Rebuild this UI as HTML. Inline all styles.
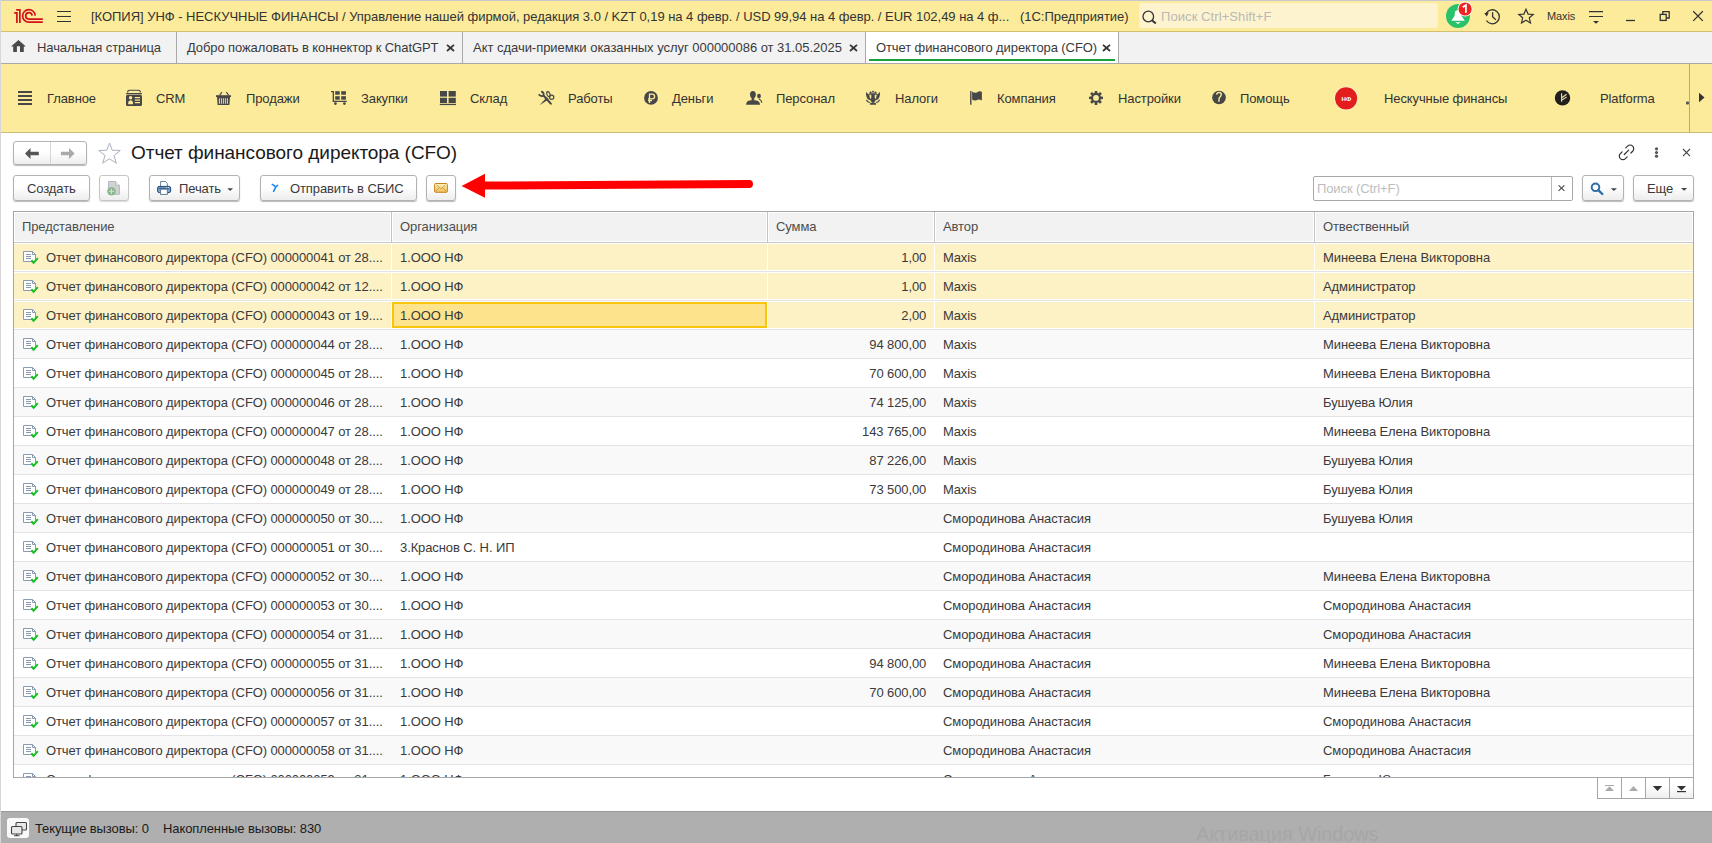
<!DOCTYPE html><html><head><meta charset="utf-8"><style>
*{box-sizing:border-box;margin:0;padding:0}
html,body{width:1712px;height:843px;overflow:hidden;background:#fff}
body{position:relative;font-family:"Liberation Sans",sans-serif;font-size:13px;color:#3a3a3a}
.a{position:absolute}
.t{position:absolute;white-space:nowrap;line-height:15px;letter-spacing:-0.1px}
svg{position:absolute;overflow:visible}
.btn{position:absolute;border:1px solid #b3b3b3;border-radius:3px;background:linear-gradient(#fff 0%,#fff 45%,#ededed 100%);box-shadow:0 1px 1px rgba(0,0,0,.28)}
</style></head><body><div class="a" style="left:0;top:0;width:1712px;height:1px;background:#c6c7cf"></div>
<div class="a" style="left:0;top:0;width:1px;height:843px;background:#d6d6d8"></div>
<div class="a" style="left:1px;top:1px;width:1711px;height:30px;background:#fbeb9b"></div>
<div class="a" style="left:1px;top:31px;width:1711px;height:1px;background:#d3c06c"></div>
<svg style="left:0;top:0" width="50" height="30" viewBox="0 0 50 30">
<g fill="none" stroke="#d4101c" stroke-width="1.7" stroke-linecap="butt">
<path d="M14.2,12.9 H16.9 V22.9"/>
<path d="M16.2,9.9 H19.85 V22.9"/>
<path d="M35.2,15.6 A6.3,6.3 0 1 0 28.9,22.15 H42.8"/>
<path d="M32.1,15.6 A3.2,3.2 0 1 0 29.0,19.1 H42.8"/>
</g></svg>
<svg style="left:0;top:0" width="80" height="30"><g stroke="#333" stroke-width="1.2"><path d="M57,11.5H71M57,16.5H71M57,21.5H71"/></g></svg>
<div class="t" style="left:91px;top:9px;color:#333;letter-spacing:-0.03px">[КОПИЯ] УНФ - НЕСКУЧНЫЕ ФИНАНСЫ / Управление нашей фирмой, редакция 3.0 / KZT 0,19 на 4 февр. / USD 99,94 на 4 февр. / EUR 102,49 на 4 ф...&nbsp;&nbsp;&nbsp;(1С:Предприятие)</div>
<div class="a" style="left:1139px;top:3px;width:299px;height:25px;background:#fdf4cf;border-radius:3px"></div>
<svg style="left:0;top:0" width="1712" height="30"><g fill="none" stroke="#333" stroke-width="1.3"><circle cx="1148.3" cy="16.5" r="5.3"/><path d="M1152,20.3 L1155.8,23.5" stroke-width="2"/></g></svg>
<div class="t" style="left:1161px;top:9px;color:#b9b9b9;letter-spacing:0.08px">Поиск Ctrl+Shift+F</div>
<svg style="left:0;top:0" width="1712" height="32">
<circle cx="1458" cy="15.9" r="12" fill="#27c26a"/>
<path d="M1451.3,20.8 L1464.8,20.8 L1461.5,16 L1461,11.5 Q1458,9 1455,11.5 L1454.5,16 Z" fill="#fff"/>
<path d="M1455.2,22.3 H1460.8 L1458,23.9 Z" fill="#fff"/>
<circle cx="1465.1" cy="9" r="7.6" fill="#fff"/>
<circle cx="1465.1" cy="9" r="6.6" fill="#f02323"/>
<path d="M1462.7,7.2 L1465.9,5.2 V12.7" fill="none" stroke="#fff" stroke-width="1.8"/>
</svg>
<svg style="left:0;top:0" width="1712" height="32"><g fill="none" stroke="#333" stroke-width="1.3">
<path d="M1486.3,13.2 A7,7 0 1 1 1486.4,20.5"/>
<path d="M1492.6,12.2 V16.8 L1495.8,19.8"/>
</g><path d="M1484.2,13.3 L1488.8,12.6 L1486.8,16.6 Z" fill="#333"/></svg>
<svg style="left:0;top:0" width="1712" height="32"><path d="M1526,9.3 L1528.1,14.1 L1533.2,14.5 L1529.3,17.8 L1530.5,22.9 L1526,20.2 L1521.5,22.9 L1522.7,17.8 L1518.8,14.5 L1523.9,14.1 Z" fill="none" stroke="#333" stroke-width="1.2" stroke-linejoin="miter"/></svg>
<div class="t" style="left:1547px;top:9px;font-size:11px;color:#333">Maxis</div>
<svg style="left:0;top:0" width="1712" height="32"><g stroke="#333" stroke-width="1.2"><path d="M1589,11.6H1603M1589,16.5H1603"/></g><path d="M1593,21 H1599 L1596,23.8 Z" fill="#333"/></svg>
<svg style="left:0;top:0" width="1712" height="32"><g fill="none" stroke="#333" stroke-width="1.3"><path d="M1626,20.5H1635"/><rect x="1660.2" y="14.4" width="6" height="6"/><path d="M1662.8,14.4 V11.6 H1669.2 V18 H1666.2"/><path d="M1693.2,11.3 L1702.8,20.9 M1702.8,11.3 L1693.2,20.9"/></g></svg>
<div class="a" style="left:1px;top:32px;width:1711px;height:31px;background:#f2f2f2"></div>
<div class="a" style="left:1px;top:63px;width:1711px;height:1px;background:#a9a9a9"></div>
<div class="a" style="left:866px;top:32px;width:252px;height:31px;background:#fff"></div>
<div class="a" style="left:176px;top:32px;width:1px;height:31px;background:#a9a9a9"></div>
<div class="a" style="left:462px;top:32px;width:1px;height:31px;background:#a9a9a9"></div>
<div class="a" style="left:865px;top:32px;width:1px;height:31px;background:#a9a9a9"></div>
<div class="a" style="left:1118px;top:32px;width:1px;height:31px;background:#a9a9a9"></div>
<div class="a" style="left:869px;top:59px;width:246px;height:2px;background:#17a03c"></div>
<svg style="left:0;top:0" width="60" height="64"><path d="M18.45,40 L11,46.6 H13.2 V51.9 H16.9 V46.3 H20 V51.9 H23.8 V46.6 H25.9 Z" fill="#4a4a4a"/></svg>
<div class="t" style="left:37px;top:40px">Начальная страница</div>
<div class="t" style="left:187px;top:40px">Добро пожаловать в коннектор к ChatGPT</div>
<div class="t" style="left:473px;top:40px;letter-spacing:-0.03px">Акт сдачи-приемки оказанных услуг 000000086 от 31.05.2025</div>
<div class="t" style="left:876px;top:40px">Отчет финансового директора (CFO)</div>
<svg style="left:0;top:0" width="1712" height="64"><path d="M447,44.8 L454,51 M454,44.8 L447,51" stroke="#333" stroke-width="1.7"/></svg>
<svg style="left:0;top:0" width="1712" height="64"><path d="M850,44.8 L857,51 M857,44.8 L850,51" stroke="#333" stroke-width="1.7"/></svg>
<svg style="left:0;top:0" width="1712" height="64"><path d="M1103,44.8 L1110,51 M1110,44.8 L1103,51" stroke="#333" stroke-width="1.7"/></svg>
<div class="a" style="left:1px;top:64px;width:1711px;height:68px;background:#fbeb9b"></div>
<div class="a" style="left:1px;top:132px;width:1711px;height:1px;background:#cbbd78"></div>
<div class="a" style="left:1689px;top:64px;width:1px;height:68px;background:#b3a982"></div>
<div class="t" style="left:47px;top:91px;color:#333">Главное</div>
<div class="t" style="left:156px;top:91px;color:#333">CRM</div>
<div class="t" style="left:246px;top:91px;color:#333">Продажи</div>
<div class="t" style="left:361px;top:91px;color:#333">Закупки</div>
<div class="t" style="left:470px;top:91px;color:#333">Склад</div>
<div class="t" style="left:568px;top:91px;color:#333">Работы</div>
<div class="t" style="left:672px;top:91px;color:#333">Деньги</div>
<div class="t" style="left:776px;top:91px;color:#333">Персонал</div>
<div class="t" style="left:895px;top:91px;color:#333">Налоги</div>
<div class="t" style="left:997px;top:91px;color:#333">Компания</div>
<div class="t" style="left:1118px;top:91px;color:#333">Настройки</div>
<div class="t" style="left:1240px;top:91px;color:#333">Помощь</div>
<div class="t" style="left:1384px;top:91px;color:#333">Нескучные финансы</div>
<div class="t" style="left:1600px;top:91px;color:#333">Platforma</div>
<svg style="left:0;top:0" width="1712" height="132">
<g fill="#474747">
<rect x="18" y="91" width="14" height="2"/><rect x="18" y="95" width="14" height="2"/><rect x="18" y="99" width="14" height="2"/><rect x="18" y="103" width="14" height="2"/>
</g>
<!-- CRM -->
<path d="M127.6,92.4 Q127.6,90.3 129.5,90.3 H138.5 Q140.4,90.3 140.4,92.4" fill="none" stroke="#474747" stroke-width="1.1"/>
<rect x="126" y="93" width="16" height="1.2" rx="0.5" fill="#474747"/>
<rect x="126" y="94.8" width="16" height="11.2" rx="1.6" fill="#474747"/>
<g fill="#fbeb9b">
<circle cx="130.6" cy="97.8" r="1.7"/>
<path d="M128.2,104.3 V102.8 Q128.2,100.3 130.6,100.3 Q133,100.3 133,102.8 V104.3 Z"/>
<rect x="134.8" y="97" width="5.2" height="1.2"/><rect x="134.8" y="99.5" width="5.2" height="1.2"/><rect x="134.8" y="102" width="5.2" height="1.2"/>
</g>
<!-- basket -->
<path d="M219.6,95.2 L222,92.2 M228.6,95.2 L226.3,92.2" fill="none" stroke="#474747" stroke-width="1.1"/>
<rect x="216" y="95.2" width="15" height="1.8" fill="#474747"/>
<path d="M217,97 H230 L229.4,105 H217.6 Z" fill="#474747"/>
<g fill="#fbeb9b"><rect x="218.9" y="98.2" width="0.9" height="5.6"/><rect x="220.9" y="98.2" width="0.9" height="5.6"/><rect x="222.9" y="98.2" width="0.9" height="5.6"/><rect x="224.9" y="98.2" width="0.9" height="5.6"/><rect x="226.9" y="98.2" width="0.9" height="5.6"/></g>
<!-- cart -->
<path d="M331.1,91.6 H333.3 V101.4 H346.8" fill="none" stroke="#474747" stroke-width="1.3"/>
<g fill="#474747">
<rect x="335.2" y="91.2" width="4.5" height="3.5"/><rect x="341.2" y="91.2" width="4.7" height="3.5"/><rect x="335.2" y="96.2" width="4.5" height="3.5"/><rect x="341.2" y="96.2" width="4.7" height="3.5"/>
<circle cx="335.4" cy="103.6" r="1.4"/><circle cx="344.4" cy="103.6" r="1.4"/>
<!-- sklad -->
<rect x="440" y="91" width="7" height="5.6"/><rect x="448.6" y="91" width="7.2" height="5.6"/><rect x="440" y="97.8" width="7" height="5.2"/><rect x="448.6" y="97.8" width="7.2" height="5.2"/><rect x="439.8" y="103.8" width="16.2" height="1.3"/>
</g>
<!-- tools -->
<g fill="none" stroke="#474747">
<path d="M541.2,91.4 Q544.3,92.6 543.6,95.4 Q542,97.4 538.6,94.4" stroke-width="1.7"/>
<path d="M544.2,96.2 L550.8,103.6" stroke-width="2.1" stroke-linecap="round"/>
<ellipse cx="548.4" cy="94.1" rx="1.5" ry="2.6" stroke-width="1.2" transform="rotate(-20 548.4 94.1)"/>
<circle cx="551.7" cy="97.3" r="2.1" stroke-width="1.2"/>
</g>
<path d="M539.5,105.3 L546.8,97.2 L548.8,99.2 Z" fill="#474747"/>
<!-- money -->
<circle cx="651" cy="97.9" r="6.9" fill="#474747"/>
<path d="M649.5,103 V94.2 H652.3 Q654.6,94.2 654.6,96.6 Q654.6,98.9 652.3,98.9 H648 M648,100.7 H652" fill="none" stroke="#fbeb9b" stroke-width="1.3"/>
<!-- person -->
<g fill="#474747">
<ellipse cx="752.9" cy="94.6" rx="2.9" ry="3.6"/>
<rect x="751.6" y="97.5" width="2.6" height="3"/>
<path d="M746.1,104.7 Q746.1,101.2 749.5,100.4 L752.9,99.9 L756.3,100.4 Q760,101.2 760,104.7 Z"/>
<ellipse cx="759" cy="96.1" rx="1.9" ry="2.4"/>
</g>
<path d="M759,99 Q761.6,100.3 761.8,102.6" fill="none" stroke="#474747" stroke-width="1.2"/>
<!-- eagle -->
<g fill="#474747">
<path d="M866.2,91.8 Q865.4,96.5 868.2,99.6 L871.6,100.4 L869.8,97.8 L869.3,94.8 Q867.4,93.9 866.2,91.8 Z"/>
<path d="M879.8,91.8 Q880.6,96.5 877.8,99.6 L874.4,100.4 L876.2,97.8 L876.7,94.8 Q878.6,93.9 879.8,91.8 Z"/>
<rect x="869" y="93.5" width="8" height="1.2"/>
<circle cx="870.6" cy="92.7" r="1.1"/><circle cx="875.4" cy="92.7" r="1.1"/>
<rect x="872.2" y="90.8" width="1.6" height="1.8"/>
<path d="M871.3,93.5 H874.7 V97.5 Q876,99.5 875,101.6 L873,103.2 L871,101.6 Q870,99.5 871.3,97.5 Z"/>
<path d="M870.3,102.8 H875.7 L876.1,104.8 H869.9 Z"/>
</g>
<path d="M866.4,99.8 Q867.4,102.2 869.8,102.6 M879.6,99.8 Q878.6,102.2 876.2,102.6" fill="none" stroke="#474747" stroke-width="1.2"/>
<!-- flag -->
<rect x="970.1" y="91.1" width="1.4" height="13.6" fill="#474747"/>
<path d="M972.1,91.6 Q973.8,92.9 975.5,92.8 Q977,92.6 978.5,91.4 Q980.5,90.8 981.9,91.9 V100.6 Q980.5,99.4 978.8,99.4 Q977,99.6 975.5,100.5 Q973.8,100.8 972.1,99.6 Z" fill="#474747"/>
<!-- gear -->
<g transform="translate(1096 97.9)" fill="#474747">
<circle r="4.8"/>
<path d="M-1.2,-7 H1.2 L1.6,-3.5 H-1.6 Z"/>
<path d="M-1.2,-7 H1.2 L1.6,-3.5 H-1.6 Z" transform="rotate(45)"/>
<path d="M-1.2,-7 H1.2 L1.6,-3.5 H-1.6 Z" transform="rotate(90)"/>
<path d="M-1.2,-7 H1.2 L1.6,-3.5 H-1.6 Z" transform="rotate(135)"/>
<path d="M-1.2,-7 H1.2 L1.6,-3.5 H-1.6 Z" transform="rotate(180)"/>
<path d="M-1.2,-7 H1.2 L1.6,-3.5 H-1.6 Z" transform="rotate(225)"/>
<path d="M-1.2,-7 H1.2 L1.6,-3.5 H-1.6 Z" transform="rotate(270)"/>
<path d="M-1.2,-7 H1.2 L1.6,-3.5 H-1.6 Z" transform="rotate(315)"/>
<circle r="2.9" fill="#fbeb9b"/>
</g>
<!-- help -->
<circle cx="1219" cy="97.5" r="6.85" fill="#474747"/>
<path d="M1216.6,94.6 Q1216.9,92.5 1219,92.5 Q1221.3,92.5 1221.3,94.6 Q1221.3,95.9 1220,97 Q1219,97.9 1219,99.2 V101.8" fill="none" stroke="#fbeb9b" stroke-width="1.4"/>
<!-- NF circle -->
<circle cx="1346.1" cy="98.3" r="11.6" fill="#fff" opacity="0.85"/>
<circle cx="1346.1" cy="98.3" r="11.1" fill="#e31c1c"/>
<text x="1346.3" y="100.6" font-family="Liberation Sans" font-weight="bold" font-size="6.2" fill="#fff" text-anchor="middle">НФ</text>
<!-- platforma -->
<circle cx="1562.5" cy="97.9" r="7.7" fill="#231f1c"/>
<path d="M1561.6,93.3 V101.7 M1561.8,97.8 L1566.6,94.3 M1561.8,100.1 L1566.6,97" stroke="#e6ddb0" stroke-width="1.1" fill="none"/>
<rect x="1686" y="101.5" width="3" height="3" rx="1" fill="#555"/>
<path d="M1699,92.8 L1704.5,97.5 L1699,102.2 Z" fill="#333"/>
</svg>
<div class="btn" style="left:13px;top:141px;width:74px;height:24px"></div>
<div class="a" style="left:50px;top:142px;width:1px;height:22px;background:#d6d6d6"></div>
<svg style="left:0;top:0" width="200" height="200">
<path d="M25,153.5 L30.5,148 V151.8 H38.8 V155.2 H30.5 V159 Z" fill="#555"/>
<path d="M74.6,153.5 L69,148 V151.8 H60.9 V155.2 H69 V159 Z" fill="#aaa"/>
<path d="M109.5,143 L112.2,150.2 L120.3,150.5 L114,155.5 L116.3,163.2 L109.5,158.8 L102.7,163.2 L105,155.5 L98.7,150.5 L106.8,150.2 Z" fill="none" stroke="#aab2bd" stroke-width="1"/>
</svg>
<div class="t" style="left:131px;top:142px;font-size:19px;line-height:22px;color:#1a1a1a;letter-spacing:-0.05px">Отчет финансового директора (CFO)</div>
<svg style="left:0;top:0" width="1712" height="200">
<g fill="none" stroke="#333" stroke-width="1.2" stroke-linecap="round">
<path d="M1625.8,147.9 L1627.55,146.15 A3.6,3.6 0 0 1 1632.65,151.25 L1630.9,153"/>
<path d="M1622.1,151.8 L1620.35,153.55 A3.6,3.6 0 0 0 1625.45,158.65 L1627.2,156.9"/>
<path d="M1624.3,154.5 L1628.7,150.1"/>
</g>
<circle cx="1656.5" cy="148.8" r="1.6" fill="#555"/><circle cx="1656.5" cy="152.5" r="1.6" fill="#555"/><circle cx="1656.5" cy="156.2" r="1.6" fill="#555"/>
<path d="M1683,149 L1690,156.2 M1690,149 L1683,156.2" stroke="#444" stroke-width="1.1"/>
</svg>
<div class="btn" style="left:13px;top:175px;width:77px;height:26px"></div>
<div class="btn" style="left:99px;top:175px;width:30px;height:26px;border-color:#c6c6c6;box-shadow:0 1px 1px rgba(0,0,0,.15)"></div>
<div class="btn" style="left:149px;top:175px;width:91px;height:26px"></div>
<div class="btn" style="left:260px;top:175px;width:157px;height:26px"></div>
<div class="btn" style="left:426px;top:175px;width:30px;height:26px"></div>
<div class="btn" style="left:1582px;top:175px;width:42px;height:26px"></div>
<div class="btn" style="left:1633px;top:175px;width:61px;height:26px"></div>
<div class="t" style="left:27px;top:181px">Создать</div>
<div class="t" style="left:179px;top:181px">Печать</div>
<div class="t" style="left:290px;top:181px">Отправить в СБИС</div>
<div class="t" style="left:1647px;top:181px">Еще</div>
<svg style="left:0;top:0" width="1712" height="210">
<!-- disabled doc icon -->
<path d="M108.5,181.5 H115.6 L119.4,185.3 V194.3 H108.5 Z" fill="#d2d2d2" stroke="#a9b5c5" stroke-width="0.9"/>
<path d="M115.6,181.5 V185.3 H119.4" fill="#eee" stroke="#a9b5c5" stroke-width="0.9"/>
<circle cx="111.5" cy="191.3" r="4.3" fill="#8db78d"/>
<path d="M111.5,188.6 V194 M108.8,191.3 H114.2" stroke="#d5e2d5" stroke-width="1"/>
<!-- printer -->
<defs><linearGradient id="pg" x1="0" y1="0" x2="0" y2="1"><stop offset="0" stop-color="#5f86b5"/><stop offset="1" stop-color="#8fb3dc"/></linearGradient>
<linearGradient id="mg" x1="0" y1="0" x2="0" y2="1"><stop offset="0" stop-color="#fdf3c0"/><stop offset="1" stop-color="#efbd58"/></linearGradient></defs>
<path d="M160.6,186.5 V181.5 H165.6 L167.3,183.4 V186.5" fill="#fff" stroke="#5b7290" stroke-width="0.9"/>
<rect x="157.6" y="186.4" width="13" height="6.2" rx="1.6" fill="url(#pg)" stroke="#1f4b7a" stroke-width="1"/>
<path d="M159.2,188.6 H169" stroke="#294f78" stroke-width="0.8"/>
<circle cx="166.5" cy="187.6" r="0.5" fill="#fff"/><circle cx="168.5" cy="187.6" r="0.5" fill="#fff"/>
<rect x="160.6" y="189.2" width="6.7" height="5.2" fill="#fff" stroke="#5b7290" stroke-width="0.9"/>
<path d="M227.3,188.3 H233 L230.15,191 Z" fill="#444"/>
<!-- sbis -->
<path d="M272.3,184.4 Q274,185 275.6,187 M277.6,185.3 Q276.3,186.2 275.6,187.3 L273.6,191.4" fill="none" stroke="#1d8af2" stroke-width="1.6" stroke-linecap="round"/>
<!-- mail -->
<rect x="434.6" y="183.5" width="12.8" height="8.8" rx="1" fill="url(#mg)" stroke="#c5851c" stroke-width="1"/>
<path d="M436.5,185 L441,188.8 L445.5,185 M435.5,191.5 L439.3,187.6 M446.5,191.5 L442.7,187.6" fill="none" stroke="#c99030" stroke-width="0.8"/>
<!-- search btn -->
<circle cx="1595.5" cy="187.3" r="3.8" fill="none" stroke="#2d6ea8" stroke-width="2"/>
<path d="M1598.3,190.2 L1602.3,194" stroke="#2d6ea8" stroke-width="2.4" stroke-linecap="round"/>
<path d="M1610.8,188.3 H1617 L1613.9,191 Z" fill="#444"/>
<path d="M1681,188 H1687.2 L1684.1,190.8 Z" fill="#444"/>
</svg>
<div class="a" style="left:1313px;top:176px;width:260px;height:25px;border:1px solid #a8a8a8;border-radius:2px;background:#fff"></div>
<div class="a" style="left:1551px;top:177px;width:1px;height:23px;background:#b8b8b8"></div>
<svg style="left:0;top:0" width="1712" height="210"><path d="M1558.6,185.3 L1564.4,190.9 M1564.4,185.3 L1558.6,190.9" stroke="#444" stroke-width="1.05"/></svg>
<div class="t" style="left:1317px;top:181px;color:#bdbdbd">Поиск (Ctrl+F)</div>
<svg style="left:0;top:0" width="1712" height="210"><path d="M461.6,185.9 L485,173.8 L485,197.7 Z" fill="#ff0000"/><path d="M484,185.6 L749,184.1" stroke="#ff0000" stroke-width="8" stroke-linecap="round"/></svg>
<div class="a" style="left:13px;top:211px;width:1681px;height:567px;border:1px solid #a6a6a6;background:#fff;overflow:hidden">
<div class="a" style="left:0;top:0;width:1679px;height:30px;background:#fff"></div>
<div class="a" style="left:1px;top:1px;width:375px;height:28px;background:#f2f2f2"></div>
<div class="a" style="left:379px;top:1px;width:373px;height:28px;background:#f2f2f2"></div>
<div class="a" style="left:377px;top:0;width:1px;height:30px;background:#c6c6c6"></div>
<div class="a" style="left:755px;top:1px;width:164px;height:28px;background:#f2f2f2"></div>
<div class="a" style="left:753px;top:0;width:1px;height:30px;background:#c6c6c6"></div>
<div class="a" style="left:922px;top:1px;width:377px;height:28px;background:#f2f2f2"></div>
<div class="a" style="left:920px;top:0;width:1px;height:30px;background:#c6c6c6"></div>
<div class="a" style="left:1302px;top:1px;width:376px;height:28px;background:#f2f2f2"></div>
<div class="a" style="left:1300px;top:0;width:1px;height:30px;background:#c6c6c6"></div>
<div class="a" style="left:0;top:30px;width:1679px;height:1px;background:#c6c6c6"></div>
<div class="t" style="left:8px;top:7px;color:#4d4d4d">Представление</div>
<div class="t" style="left:386px;top:7px;color:#4d4d4d">Организация</div>
<div class="t" style="left:762px;top:7px;color:#4d4d4d">Сумма</div>
<div class="t" style="left:929px;top:7px;color:#4d4d4d">Автор</div>
<div class="t" style="left:1309px;top:7px;color:#4d4d4d">Отвественный</div>
<div class="a" style="left:0;top:31px;width:1679px;height:28px;background:#fff"></div>
<div class="a" style="left:0px;top:32px;width:377px;height:26px;background:#fdf1c6"></div>
<div class="a" style="left:378px;top:32px;width:375px;height:26px;background:#fdf1c6"></div>
<div class="a" style="left:754px;top:32px;width:166px;height:26px;background:#fdf1c6"></div>
<div class="a" style="left:921px;top:32px;width:379px;height:26px;background:#fdf1c6"></div>
<div class="a" style="left:1301px;top:32px;width:378px;height:26px;background:#fdf1c6"></div>
<div class="a" style="left:0;top:59px;width:1679px;height:1px;background:#e4e4e4"></div>
<svg style="left:9px;top:39px" width="18" height="14" viewBox="0 0 18 14"><path d="M0.5,0.5 H9.5 L12.5,3.5 V10.5 H0.5 Z" fill="#fff" stroke="#8a9ab0" stroke-width="1"/><path d="M9.5,0.5 V3.5 H12.5" fill="none" stroke="#8a9ab0" stroke-width="1"/><path d="M3,3.5 H8 M3,5.5 H8 M3,7.5 H8" stroke="#8a9ab0" stroke-width="1"/><path d="M8.3,9.3 L10.6,11.8 L14.8,7.2" fill="none" stroke="#17c022" stroke-width="2"/></svg>
<div class="t" style="left:32px;top:38px">Отчет финансового директора (CFO) 000000041 от 28....</div>
<div class="t" style="left:386px;top:38px">1.ООО НФ</div>
<div class="t" style="left:756px;width:156.2px;top:38px;text-align:right">1,00</div>
<div class="t" style="left:929px;top:38px">Maxis</div>
<div class="t" style="left:1309px;top:38px">Минеева Елена Викторовна</div>
<div class="a" style="left:0;top:60px;width:1679px;height:28px;background:#fff"></div>
<div class="a" style="left:0px;top:61px;width:377px;height:26px;background:#fdf1c6"></div>
<div class="a" style="left:378px;top:61px;width:375px;height:26px;background:#fdf1c6"></div>
<div class="a" style="left:754px;top:61px;width:166px;height:26px;background:#fdf1c6"></div>
<div class="a" style="left:921px;top:61px;width:379px;height:26px;background:#fdf1c6"></div>
<div class="a" style="left:1301px;top:61px;width:378px;height:26px;background:#fdf1c6"></div>
<div class="a" style="left:0;top:88px;width:1679px;height:1px;background:#e4e4e4"></div>
<svg style="left:9px;top:68px" width="18" height="14" viewBox="0 0 18 14"><path d="M0.5,0.5 H9.5 L12.5,3.5 V10.5 H0.5 Z" fill="#fff" stroke="#8a9ab0" stroke-width="1"/><path d="M9.5,0.5 V3.5 H12.5" fill="none" stroke="#8a9ab0" stroke-width="1"/><path d="M3,3.5 H8 M3,5.5 H8 M3,7.5 H8" stroke="#8a9ab0" stroke-width="1"/><path d="M8.3,9.3 L10.6,11.8 L14.8,7.2" fill="none" stroke="#17c022" stroke-width="2"/></svg>
<div class="t" style="left:32px;top:67px">Отчет финансового директора (CFO) 000000042 от 12....</div>
<div class="t" style="left:386px;top:67px">1.ООО НФ</div>
<div class="t" style="left:756px;width:156.2px;top:67px;text-align:right">1,00</div>
<div class="t" style="left:929px;top:67px">Maxis</div>
<div class="t" style="left:1309px;top:67px">Администратор</div>
<div class="a" style="left:0;top:89px;width:1679px;height:28px;background:#fff"></div>
<div class="a" style="left:0px;top:90px;width:377px;height:26px;background:#fdf1c6"></div>
<div class="a" style="left:378px;top:90px;width:375px;height:26px;background:#fdf1c6"></div>
<div class="a" style="left:754px;top:90px;width:166px;height:26px;background:#fdf1c6"></div>
<div class="a" style="left:921px;top:90px;width:379px;height:26px;background:#fdf1c6"></div>
<div class="a" style="left:1301px;top:90px;width:378px;height:26px;background:#fdf1c6"></div>
<div class="a" style="left:0;top:117px;width:1679px;height:1px;background:#e4e4e4"></div>
<svg style="left:9px;top:97px" width="18" height="14" viewBox="0 0 18 14"><path d="M0.5,0.5 H9.5 L12.5,3.5 V10.5 H0.5 Z" fill="#fff" stroke="#8a9ab0" stroke-width="1"/><path d="M9.5,0.5 V3.5 H12.5" fill="none" stroke="#8a9ab0" stroke-width="1"/><path d="M3,3.5 H8 M3,5.5 H8 M3,7.5 H8" stroke="#8a9ab0" stroke-width="1"/><path d="M8.3,9.3 L10.6,11.8 L14.8,7.2" fill="none" stroke="#17c022" stroke-width="2"/></svg>
<div class="t" style="left:32px;top:96px">Отчет финансового директора (CFO) 000000043 от 19....</div>
<div class="a" style="left:378px;top:90px;width:375px;height:26px;border:2px solid #f8c50e;background:#fde38c"></div>
<div class="t" style="left:386px;top:96px">1.ООО НФ</div>
<div class="t" style="left:756px;width:156.2px;top:96px;text-align:right">2,00</div>
<div class="t" style="left:929px;top:96px">Maxis</div>
<div class="t" style="left:1309px;top:96px">Администратор</div>
<div class="a" style="left:0;top:118px;width:1679px;height:28px;background:#f9f9f9"></div>
<div class="a" style="left:0;top:146px;width:1679px;height:1px;background:#e4e4e4"></div>
<svg style="left:9px;top:126px" width="18" height="14" viewBox="0 0 18 14"><path d="M0.5,0.5 H9.5 L12.5,3.5 V10.5 H0.5 Z" fill="#fff" stroke="#8a9ab0" stroke-width="1"/><path d="M9.5,0.5 V3.5 H12.5" fill="none" stroke="#8a9ab0" stroke-width="1"/><path d="M3,3.5 H8 M3,5.5 H8 M3,7.5 H8" stroke="#8a9ab0" stroke-width="1"/><path d="M8.3,9.3 L10.6,11.8 L14.8,7.2" fill="none" stroke="#17c022" stroke-width="2"/></svg>
<div class="t" style="left:32px;top:125px">Отчет финансового директора (CFO) 000000044 от 28....</div>
<div class="t" style="left:386px;top:125px">1.ООО НФ</div>
<div class="t" style="left:756px;width:156.2px;top:125px;text-align:right">94 800,00</div>
<div class="t" style="left:929px;top:125px">Maxis</div>
<div class="t" style="left:1309px;top:125px">Минеева Елена Викторовна</div>
<div class="a" style="left:0;top:147px;width:1679px;height:28px;background:#ffffff"></div>
<div class="a" style="left:0;top:175px;width:1679px;height:1px;background:#e4e4e4"></div>
<svg style="left:9px;top:155px" width="18" height="14" viewBox="0 0 18 14"><path d="M0.5,0.5 H9.5 L12.5,3.5 V10.5 H0.5 Z" fill="#fff" stroke="#8a9ab0" stroke-width="1"/><path d="M9.5,0.5 V3.5 H12.5" fill="none" stroke="#8a9ab0" stroke-width="1"/><path d="M3,3.5 H8 M3,5.5 H8 M3,7.5 H8" stroke="#8a9ab0" stroke-width="1"/><path d="M8.3,9.3 L10.6,11.8 L14.8,7.2" fill="none" stroke="#17c022" stroke-width="2"/></svg>
<div class="t" style="left:32px;top:154px">Отчет финансового директора (CFO) 000000045 от 28....</div>
<div class="t" style="left:386px;top:154px">1.ООО НФ</div>
<div class="t" style="left:756px;width:156.2px;top:154px;text-align:right">70 600,00</div>
<div class="t" style="left:929px;top:154px">Maxis</div>
<div class="t" style="left:1309px;top:154px">Минеева Елена Викторовна</div>
<div class="a" style="left:0;top:176px;width:1679px;height:28px;background:#f9f9f9"></div>
<div class="a" style="left:0;top:204px;width:1679px;height:1px;background:#e4e4e4"></div>
<svg style="left:9px;top:184px" width="18" height="14" viewBox="0 0 18 14"><path d="M0.5,0.5 H9.5 L12.5,3.5 V10.5 H0.5 Z" fill="#fff" stroke="#8a9ab0" stroke-width="1"/><path d="M9.5,0.5 V3.5 H12.5" fill="none" stroke="#8a9ab0" stroke-width="1"/><path d="M3,3.5 H8 M3,5.5 H8 M3,7.5 H8" stroke="#8a9ab0" stroke-width="1"/><path d="M8.3,9.3 L10.6,11.8 L14.8,7.2" fill="none" stroke="#17c022" stroke-width="2"/></svg>
<div class="t" style="left:32px;top:183px">Отчет финансового директора (CFO) 000000046 от 28....</div>
<div class="t" style="left:386px;top:183px">1.ООО НФ</div>
<div class="t" style="left:756px;width:156.2px;top:183px;text-align:right">74 125,00</div>
<div class="t" style="left:929px;top:183px">Maxis</div>
<div class="t" style="left:1309px;top:183px">Бушуева Юлия</div>
<div class="a" style="left:0;top:205px;width:1679px;height:28px;background:#ffffff"></div>
<div class="a" style="left:0;top:233px;width:1679px;height:1px;background:#e4e4e4"></div>
<svg style="left:9px;top:213px" width="18" height="14" viewBox="0 0 18 14"><path d="M0.5,0.5 H9.5 L12.5,3.5 V10.5 H0.5 Z" fill="#fff" stroke="#8a9ab0" stroke-width="1"/><path d="M9.5,0.5 V3.5 H12.5" fill="none" stroke="#8a9ab0" stroke-width="1"/><path d="M3,3.5 H8 M3,5.5 H8 M3,7.5 H8" stroke="#8a9ab0" stroke-width="1"/><path d="M8.3,9.3 L10.6,11.8 L14.8,7.2" fill="none" stroke="#17c022" stroke-width="2"/></svg>
<div class="t" style="left:32px;top:212px">Отчет финансового директора (CFO) 000000047 от 28....</div>
<div class="t" style="left:386px;top:212px">1.ООО НФ</div>
<div class="t" style="left:756px;width:156.2px;top:212px;text-align:right">143 765,00</div>
<div class="t" style="left:929px;top:212px">Maxis</div>
<div class="t" style="left:1309px;top:212px">Минеева Елена Викторовна</div>
<div class="a" style="left:0;top:234px;width:1679px;height:28px;background:#f9f9f9"></div>
<div class="a" style="left:0;top:262px;width:1679px;height:1px;background:#e4e4e4"></div>
<svg style="left:9px;top:242px" width="18" height="14" viewBox="0 0 18 14"><path d="M0.5,0.5 H9.5 L12.5,3.5 V10.5 H0.5 Z" fill="#fff" stroke="#8a9ab0" stroke-width="1"/><path d="M9.5,0.5 V3.5 H12.5" fill="none" stroke="#8a9ab0" stroke-width="1"/><path d="M3,3.5 H8 M3,5.5 H8 M3,7.5 H8" stroke="#8a9ab0" stroke-width="1"/><path d="M8.3,9.3 L10.6,11.8 L14.8,7.2" fill="none" stroke="#17c022" stroke-width="2"/></svg>
<div class="t" style="left:32px;top:241px">Отчет финансового директора (CFO) 000000048 от 28....</div>
<div class="t" style="left:386px;top:241px">1.ООО НФ</div>
<div class="t" style="left:756px;width:156.2px;top:241px;text-align:right">87 226,00</div>
<div class="t" style="left:929px;top:241px">Maxis</div>
<div class="t" style="left:1309px;top:241px">Бушуева Юлия</div>
<div class="a" style="left:0;top:263px;width:1679px;height:28px;background:#ffffff"></div>
<div class="a" style="left:0;top:291px;width:1679px;height:1px;background:#e4e4e4"></div>
<svg style="left:9px;top:271px" width="18" height="14" viewBox="0 0 18 14"><path d="M0.5,0.5 H9.5 L12.5,3.5 V10.5 H0.5 Z" fill="#fff" stroke="#8a9ab0" stroke-width="1"/><path d="M9.5,0.5 V3.5 H12.5" fill="none" stroke="#8a9ab0" stroke-width="1"/><path d="M3,3.5 H8 M3,5.5 H8 M3,7.5 H8" stroke="#8a9ab0" stroke-width="1"/><path d="M8.3,9.3 L10.6,11.8 L14.8,7.2" fill="none" stroke="#17c022" stroke-width="2"/></svg>
<div class="t" style="left:32px;top:270px">Отчет финансового директора (CFO) 000000049 от 28....</div>
<div class="t" style="left:386px;top:270px">1.ООО НФ</div>
<div class="t" style="left:756px;width:156.2px;top:270px;text-align:right">73 500,00</div>
<div class="t" style="left:929px;top:270px">Maxis</div>
<div class="t" style="left:1309px;top:270px">Бушуева Юлия</div>
<div class="a" style="left:0;top:292px;width:1679px;height:28px;background:#f9f9f9"></div>
<div class="a" style="left:0;top:320px;width:1679px;height:1px;background:#e4e4e4"></div>
<svg style="left:9px;top:300px" width="18" height="14" viewBox="0 0 18 14"><path d="M0.5,0.5 H9.5 L12.5,3.5 V10.5 H0.5 Z" fill="#fff" stroke="#8a9ab0" stroke-width="1"/><path d="M9.5,0.5 V3.5 H12.5" fill="none" stroke="#8a9ab0" stroke-width="1"/><path d="M3,3.5 H8 M3,5.5 H8 M3,7.5 H8" stroke="#8a9ab0" stroke-width="1"/><path d="M8.3,9.3 L10.6,11.8 L14.8,7.2" fill="none" stroke="#17c022" stroke-width="2"/></svg>
<div class="t" style="left:32px;top:299px">Отчет финансового директора (CFO) 000000050 от 30....</div>
<div class="t" style="left:386px;top:299px">1.ООО НФ</div>
<div class="t" style="left:929px;top:299px">Смородинова Анастасия</div>
<div class="t" style="left:1309px;top:299px">Бушуева Юлия</div>
<div class="a" style="left:0;top:321px;width:1679px;height:28px;background:#ffffff"></div>
<div class="a" style="left:0;top:349px;width:1679px;height:1px;background:#e4e4e4"></div>
<svg style="left:9px;top:329px" width="18" height="14" viewBox="0 0 18 14"><path d="M0.5,0.5 H9.5 L12.5,3.5 V10.5 H0.5 Z" fill="#fff" stroke="#8a9ab0" stroke-width="1"/><path d="M9.5,0.5 V3.5 H12.5" fill="none" stroke="#8a9ab0" stroke-width="1"/><path d="M3,3.5 H8 M3,5.5 H8 M3,7.5 H8" stroke="#8a9ab0" stroke-width="1"/><path d="M8.3,9.3 L10.6,11.8 L14.8,7.2" fill="none" stroke="#17c022" stroke-width="2"/></svg>
<div class="t" style="left:32px;top:328px">Отчет финансового директора (CFO) 000000051 от 30....</div>
<div class="t" style="left:386px;top:328px">3.Краснов С. Н. ИП</div>
<div class="t" style="left:929px;top:328px">Смородинова Анастасия</div>
<div class="a" style="left:0;top:350px;width:1679px;height:28px;background:#f9f9f9"></div>
<div class="a" style="left:0;top:378px;width:1679px;height:1px;background:#e4e4e4"></div>
<svg style="left:9px;top:358px" width="18" height="14" viewBox="0 0 18 14"><path d="M0.5,0.5 H9.5 L12.5,3.5 V10.5 H0.5 Z" fill="#fff" stroke="#8a9ab0" stroke-width="1"/><path d="M9.5,0.5 V3.5 H12.5" fill="none" stroke="#8a9ab0" stroke-width="1"/><path d="M3,3.5 H8 M3,5.5 H8 M3,7.5 H8" stroke="#8a9ab0" stroke-width="1"/><path d="M8.3,9.3 L10.6,11.8 L14.8,7.2" fill="none" stroke="#17c022" stroke-width="2"/></svg>
<div class="t" style="left:32px;top:357px">Отчет финансового директора (CFO) 000000052 от 30....</div>
<div class="t" style="left:386px;top:357px">1.ООО НФ</div>
<div class="t" style="left:929px;top:357px">Смородинова Анастасия</div>
<div class="t" style="left:1309px;top:357px">Минеева Елена Викторовна</div>
<div class="a" style="left:0;top:379px;width:1679px;height:28px;background:#ffffff"></div>
<div class="a" style="left:0;top:407px;width:1679px;height:1px;background:#e4e4e4"></div>
<svg style="left:9px;top:387px" width="18" height="14" viewBox="0 0 18 14"><path d="M0.5,0.5 H9.5 L12.5,3.5 V10.5 H0.5 Z" fill="#fff" stroke="#8a9ab0" stroke-width="1"/><path d="M9.5,0.5 V3.5 H12.5" fill="none" stroke="#8a9ab0" stroke-width="1"/><path d="M3,3.5 H8 M3,5.5 H8 M3,7.5 H8" stroke="#8a9ab0" stroke-width="1"/><path d="M8.3,9.3 L10.6,11.8 L14.8,7.2" fill="none" stroke="#17c022" stroke-width="2"/></svg>
<div class="t" style="left:32px;top:386px">Отчет финансового директора (CFO) 000000053 от 30....</div>
<div class="t" style="left:386px;top:386px">1.ООО НФ</div>
<div class="t" style="left:929px;top:386px">Смородинова Анастасия</div>
<div class="t" style="left:1309px;top:386px">Смородинова Анастасия</div>
<div class="a" style="left:0;top:408px;width:1679px;height:28px;background:#f9f9f9"></div>
<div class="a" style="left:0;top:436px;width:1679px;height:1px;background:#e4e4e4"></div>
<svg style="left:9px;top:416px" width="18" height="14" viewBox="0 0 18 14"><path d="M0.5,0.5 H9.5 L12.5,3.5 V10.5 H0.5 Z" fill="#fff" stroke="#8a9ab0" stroke-width="1"/><path d="M9.5,0.5 V3.5 H12.5" fill="none" stroke="#8a9ab0" stroke-width="1"/><path d="M3,3.5 H8 M3,5.5 H8 M3,7.5 H8" stroke="#8a9ab0" stroke-width="1"/><path d="M8.3,9.3 L10.6,11.8 L14.8,7.2" fill="none" stroke="#17c022" stroke-width="2"/></svg>
<div class="t" style="left:32px;top:415px">Отчет финансового директора (CFO) 000000054 от 31....</div>
<div class="t" style="left:386px;top:415px">1.ООО НФ</div>
<div class="t" style="left:929px;top:415px">Смородинова Анастасия</div>
<div class="t" style="left:1309px;top:415px">Смородинова Анастасия</div>
<div class="a" style="left:0;top:437px;width:1679px;height:28px;background:#ffffff"></div>
<div class="a" style="left:0;top:465px;width:1679px;height:1px;background:#e4e4e4"></div>
<svg style="left:9px;top:445px" width="18" height="14" viewBox="0 0 18 14"><path d="M0.5,0.5 H9.5 L12.5,3.5 V10.5 H0.5 Z" fill="#fff" stroke="#8a9ab0" stroke-width="1"/><path d="M9.5,0.5 V3.5 H12.5" fill="none" stroke="#8a9ab0" stroke-width="1"/><path d="M3,3.5 H8 M3,5.5 H8 M3,7.5 H8" stroke="#8a9ab0" stroke-width="1"/><path d="M8.3,9.3 L10.6,11.8 L14.8,7.2" fill="none" stroke="#17c022" stroke-width="2"/></svg>
<div class="t" style="left:32px;top:444px">Отчет финансового директора (CFO) 000000055 от 31....</div>
<div class="t" style="left:386px;top:444px">1.ООО НФ</div>
<div class="t" style="left:756px;width:156.2px;top:444px;text-align:right">94 800,00</div>
<div class="t" style="left:929px;top:444px">Смородинова Анастасия</div>
<div class="t" style="left:1309px;top:444px">Минеева Елена Викторовна</div>
<div class="a" style="left:0;top:466px;width:1679px;height:28px;background:#f9f9f9"></div>
<div class="a" style="left:0;top:494px;width:1679px;height:1px;background:#e4e4e4"></div>
<svg style="left:9px;top:474px" width="18" height="14" viewBox="0 0 18 14"><path d="M0.5,0.5 H9.5 L12.5,3.5 V10.5 H0.5 Z" fill="#fff" stroke="#8a9ab0" stroke-width="1"/><path d="M9.5,0.5 V3.5 H12.5" fill="none" stroke="#8a9ab0" stroke-width="1"/><path d="M3,3.5 H8 M3,5.5 H8 M3,7.5 H8" stroke="#8a9ab0" stroke-width="1"/><path d="M8.3,9.3 L10.6,11.8 L14.8,7.2" fill="none" stroke="#17c022" stroke-width="2"/></svg>
<div class="t" style="left:32px;top:473px">Отчет финансового директора (CFO) 000000056 от 31....</div>
<div class="t" style="left:386px;top:473px">1.ООО НФ</div>
<div class="t" style="left:756px;width:156.2px;top:473px;text-align:right">70 600,00</div>
<div class="t" style="left:929px;top:473px">Смородинова Анастасия</div>
<div class="t" style="left:1309px;top:473px">Минеева Елена Викторовна</div>
<div class="a" style="left:0;top:495px;width:1679px;height:28px;background:#ffffff"></div>
<div class="a" style="left:0;top:523px;width:1679px;height:1px;background:#e4e4e4"></div>
<svg style="left:9px;top:503px" width="18" height="14" viewBox="0 0 18 14"><path d="M0.5,0.5 H9.5 L12.5,3.5 V10.5 H0.5 Z" fill="#fff" stroke="#8a9ab0" stroke-width="1"/><path d="M9.5,0.5 V3.5 H12.5" fill="none" stroke="#8a9ab0" stroke-width="1"/><path d="M3,3.5 H8 M3,5.5 H8 M3,7.5 H8" stroke="#8a9ab0" stroke-width="1"/><path d="M8.3,9.3 L10.6,11.8 L14.8,7.2" fill="none" stroke="#17c022" stroke-width="2"/></svg>
<div class="t" style="left:32px;top:502px">Отчет финансового директора (CFO) 000000057 от 31....</div>
<div class="t" style="left:386px;top:502px">1.ООО НФ</div>
<div class="t" style="left:929px;top:502px">Смородинова Анастасия</div>
<div class="t" style="left:1309px;top:502px">Смородинова Анастасия</div>
<div class="a" style="left:0;top:524px;width:1679px;height:28px;background:#f9f9f9"></div>
<div class="a" style="left:0;top:552px;width:1679px;height:1px;background:#e4e4e4"></div>
<svg style="left:9px;top:532px" width="18" height="14" viewBox="0 0 18 14"><path d="M0.5,0.5 H9.5 L12.5,3.5 V10.5 H0.5 Z" fill="#fff" stroke="#8a9ab0" stroke-width="1"/><path d="M9.5,0.5 V3.5 H12.5" fill="none" stroke="#8a9ab0" stroke-width="1"/><path d="M3,3.5 H8 M3,5.5 H8 M3,7.5 H8" stroke="#8a9ab0" stroke-width="1"/><path d="M8.3,9.3 L10.6,11.8 L14.8,7.2" fill="none" stroke="#17c022" stroke-width="2"/></svg>
<div class="t" style="left:32px;top:531px">Отчет финансового директора (CFO) 000000058 от 31....</div>
<div class="t" style="left:386px;top:531px">1.ООО НФ</div>
<div class="t" style="left:929px;top:531px">Смородинова Анастасия</div>
<div class="t" style="left:1309px;top:531px">Смородинова Анастасия</div>
<div class="a" style="left:0;top:553px;width:1679px;height:28px;background:#ffffff"></div>
<div class="a" style="left:0;top:581px;width:1679px;height:1px;background:#e4e4e4"></div>
<svg style="left:9px;top:561px" width="18" height="14" viewBox="0 0 18 14"><path d="M0.5,0.5 H9.5 L12.5,3.5 V10.5 H0.5 Z" fill="#fff" stroke="#8a9ab0" stroke-width="1"/><path d="M9.5,0.5 V3.5 H12.5" fill="none" stroke="#8a9ab0" stroke-width="1"/><path d="M3,3.5 H8 M3,5.5 H8 M3,7.5 H8" stroke="#8a9ab0" stroke-width="1"/><path d="M8.3,9.3 L10.6,11.8 L14.8,7.2" fill="none" stroke="#17c022" stroke-width="2"/></svg>
<div class="t" style="left:32px;top:560px">Отчет финансового директора (CFO) 000000059 от 31....</div>
<div class="t" style="left:386px;top:560px">1.ООО НФ</div>
<div class="t" style="left:929px;top:560px">Смородинова Анастасия</div>
<div class="t" style="left:1309px;top:560px">Бушуева Юлия</div>
</div>
<div class="a" style="left:1597px;top:778px;width:97px;height:21px;border:1px solid #a6a6a6;border-top:none;background:#fff"></div>
<div class="a" style="left:1646px;top:778px;width:47px;height:20px;background:linear-gradient(#fff 40%,#eee)"></div>
<div class="a" style="left:1621px;top:778px;width:1px;height:20px;background:#a6a6a6"></div>
<div class="a" style="left:1645px;top:778px;width:1px;height:20px;background:#a6a6a6"></div>
<div class="a" style="left:1669px;top:778px;width:1px;height:20px;background:#a6a6a6"></div>
<svg style="left:0;top:0" width="1712" height="843">
<rect x="1605" y="785" width="9" height="1" fill="#aaa"/><path d="M1605,791 L1609.5,786.3 L1614,791 Z" fill="#aaa"/>
<path d="M1629,791 L1633.5,786 L1638,791 Z" fill="#aaa"/>
<path d="M1652.8,786 L1662.2,786 L1657.5,791 Z" fill="#333"/>
<path d="M1677,786 L1686,786 L1681.5,790.5 Z" fill="#333"/><rect x="1677" y="791" width="9" height="1.2" fill="#333"/>
</svg>
<div class="a" style="left:1px;top:811px;width:1711px;height:32px;background:#afafaf"></div>
<div class="a" style="left:1px;top:811px;width:1711px;height:1px;background:#9a9a9a"></div>
<div class="a" style="left:7px;top:818px;width:22px;height:20px;background:#fafafa;border-radius:3px"></div>
<svg style="left:0;top:0" width="200" height="843"><g fill="#e8e8e8" stroke="#444" stroke-width="1.1">
<rect x="16" y="822.5" width="10.5" height="7.5" rx="1"/>
<rect x="11.5" y="826.5" width="10.5" height="7.5" rx="1"/>
</g><path d="M16.7,834 V835.5 M14,835.8 H19.5" stroke="#444" stroke-width="1.1"/></svg>
<div class="t" style="left:35px;top:821px;color:#1a1a1a">Текущие вызовы: 0</div>
<div class="t" style="left:163px;top:821px;color:#1a1a1a">Накопленные вызовы: 830</div>
<div class="t" style="left:1196px;top:823px;font-size:20px;line-height:22px;color:#a6a6a6">Активация Windows</div></body></html>
